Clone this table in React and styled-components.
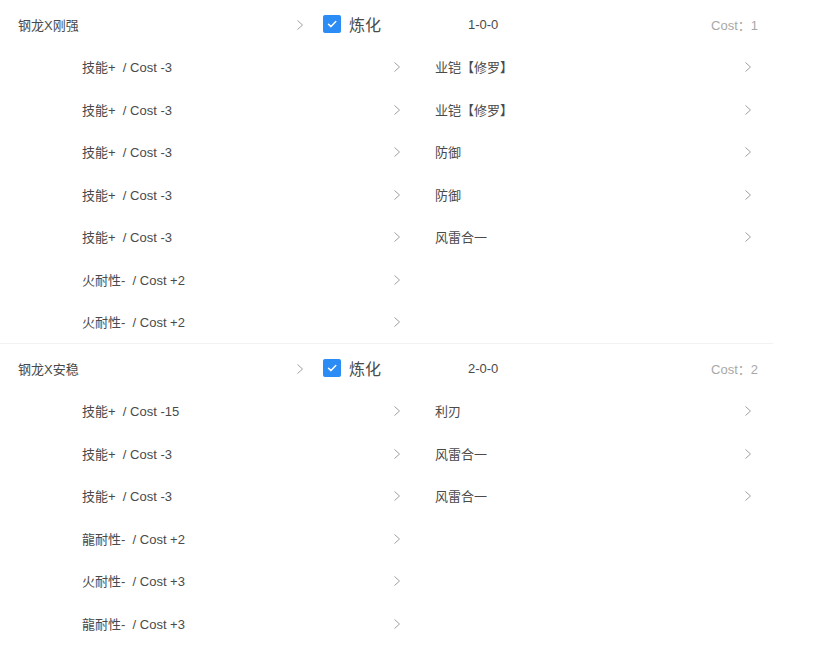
/* App.jsx */

import React from "react";

// styled-components
import styled, { createGlobalStyle } from "styled-components";

const groups = [
    {
        name: "钢龙X刚强",
        code: "1-0-0",
        cost: 1,
        left: [
            "技能+  / Cost -3",
            "技能+  / Cost -3",
            "技能+  / Cost -3",
            "技能+  / Cost -3",
            "技能+  / Cost -3",
            "火耐性-  / Cost +2",
            "火耐性-  / Cost +2",
        ],
        right: ["业铠【修罗】", "业铠【修罗】", "防御", "防御", "风雷合一"],
    },
    {
        name: "钢龙X安稳",
        code: "2-0-0",
        cost: 2,
        left: [
            "技能+  / Cost -15",
            "技能+  / Cost -3",
            "技能+  / Cost -3",
            "龍耐性-  / Cost +2",
            "火耐性-  / Cost +3",
            "龍耐性-  / Cost +3",
        ],
        right: ["利刃", "风雷合一", "风雷合一"],
    },
];

const Chevron = () => (
    <ArrowIcon width="8" height="12" viewBox="0 0 8 12">
        <polyline points="1.5,1.5 6.5,6 1.5,10.5" fill="none" stroke="currentColor" strokeWidth="1" />
    </ArrowIcon>
);

const Check = () => (
    <svg width="12" height="12" viewBox="0 0 12 12">
        <polyline points="2.5,6.2 5,8.6 9.8,3.6" fill="none" stroke="#fff" strokeWidth="1.5" strokeLinecap="round" strokeLinejoin="round" />
    </svg>
);

const App = () => {
    return (
        <>
            <GlobalStyle />
            <Container>
                {groups.map((g, i) => (
                    <Group key={i}>
                        <HeaderRow>
                            <NameCell>
                                <span>{g.name}</span>
                                <Chevron />
                            </NameCell>
                            <CheckCell>
                                <CheckBox><Check /></CheckBox>
                                <CheckLabel>炼化</CheckLabel>
                            </CheckCell>
                            <Code>{g.code}</Code>
                            <Cost>Cost：{g.cost}</Cost>
                        </HeaderRow>
                        <SubGrid>
                            <SubList>
                                {g.left.map((t, j) => (
                                    <SubRow key={j} $side="left">
                                        <span>{t}</span>
                                        <Chevron />
                                    </SubRow>
                                ))}
                            </SubList>
                            <SubList>
                                {g.right.map((t, j) => (
                                    <SubRow key={j} $side="right">
                                        <span>{t}</span>
                                        <Chevron />
                                    </SubRow>
                                ))}
                            </SubList>
                        </SubGrid>
                    </Group>
                ))}
            </Container>
        </>
    );
};

const GlobalStyle = createGlobalStyle`
  body {
    margin: 0;
    background: #fff;
    font-family: "Liberation Sans", "Noto Sans CJK SC", sans-serif;
    color: #4a4a4a;
  }
`;

const Container = styled.div`
  width: 773px;
`;

const Group = styled.div`
  padding-top: 3px;

  &:not(:last-child) {
    border-bottom: 1px solid #f2f2f2;
  }
`;

const HeaderRow = styled.div`
  display: grid;
  grid-template-columns: 315px 153px 1fr auto;
  align-items: center;
  height: 42.5px;
  font-size: 13px;
`;

const NameCell = styled.div`
  display: flex;
  align-items: center;
  justify-content: space-between;
  padding: 0 11px 0 18px;
  color: #4a4a4a;
`;

const ArrowIcon = styled.svg`
  color: #a0a0a0;
  flex-shrink: 0;
  margin-top: 1px;
`;

const CheckCell = styled.div`
  display: flex;
  align-items: center;
  gap: 8px;
  padding-left: 8px;
`;

const CheckBox = styled.span`
  display: flex;
  align-items: center;
  justify-content: center;
  width: 18px;
  height: 18px;
  border-radius: 2px;
  background: #2b8cf5;
`;

const CheckLabel = styled.span`
  font-size: 16px;
  color: #4a4a4a;
`;

const Code = styled.div`
  color: #4a4a4a;
`;

const Cost = styled.div`
  color: #a8a8a8;
  padding-right: 15px;
`;

const SubGrid = styled.div`
  display: grid;
  grid-template-columns: 415px 1fr;
`;

const SubList = styled.div`
  display: flex;
  flex-direction: column;
`;

const SubRow = styled.div`
  display: flex;
  align-items: center;
  justify-content: space-between;
  height: 42.5px;
  font-size: 13px;
  color: #4a4a4a;
  white-space: pre;
  padding: ${(p) => (p.$side === "left" ? "0 14px 0 82px" : "0 21px 0 20px")};
`;

export default App;
